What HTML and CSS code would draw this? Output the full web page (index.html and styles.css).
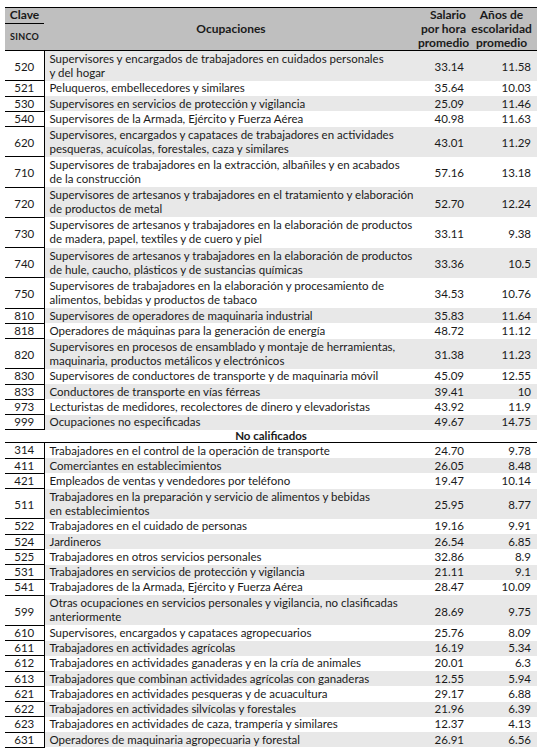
FILE: index.html
```html
<!DOCTYPE html>
<html lang="es">
<head>
<meta charset="utf-8">
<link rel="stylesheet" href="styles.css">
</head>
<body>
<table class="tbl">
  <colgroup>
    <col class="c-key"><col class="c-occ"><col class="c-sal"><col class="c-yrs">
  </colgroup>
  <thead>
    <tr>
      <th class="h-clave">Clave</th>
      <th class="h-occ" rowspan="2">Ocupaciones</th>
      <th class="h-num" rowspan="2">Salario<br>por hora<br>promedio</th>
      <th class="h-num h-yrs" rowspan="2">Años de<br>escolaridad<br>promedio</th>
    </tr>
    <tr><th class="h-sinco">SINCO</th></tr>
  </thead>
  <tbody>
    <tr class="g d"><td class="k">520</td><td class="o">Supervisores y encargados de trabajadores en cuidados personales<br>y del hogar</td><td class="n">33.14</td><td class="n y">11.58</td></tr>
    <tr class="s"><td class="k">521</td><td class="o">Peluqueros, embellecedores y similares</td><td class="n">35.64</td><td class="n y">10.03</td></tr>
    <tr class="g s"><td class="k">530</td><td class="o">Supervisores en servicios de protección y vigilancia</td><td class="n">25.09</td><td class="n y">11.46</td></tr>
    <tr class="s"><td class="k">540</td><td class="o">Supervisores de la Armada, Ejército y Fuerza Aérea</td><td class="n">40.98</td><td class="n y">11.63</td></tr>
    <tr class="g d"><td class="k">620</td><td class="o">Supervisores, encargados y capataces de trabajadores en actividades<br>pesqueras, acuícolas, forestales, caza y similares</td><td class="n">43.01</td><td class="n y">11.29</td></tr>
    <tr class="d"><td class="k">710</td><td class="o">Supervisores de trabajadores en la extracción, albañiles y en acabados<br>de la construcción</td><td class="n">57.16</td><td class="n y">13.18</td></tr>
    <tr class="g d"><td class="k">720</td><td class="o">Supervisores de artesanos y trabajadores en el tratamiento y elaboración<br>de productos de metal</td><td class="n">52.70</td><td class="n y">12.24</td></tr>
    <tr class="d"><td class="k">730</td><td class="o">Supervisores de artesanos y trabajadores en la elaboración de productos<br>de madera, papel, textiles y de cuero y piel</td><td class="n">33.11</td><td class="n y">9.38</td></tr>
    <tr class="g d"><td class="k">740</td><td class="o">Supervisores de artesanos y trabajadores en la elaboración de productos<br>de hule, caucho, plásticos y de sustancias químicas</td><td class="n">33.36</td><td class="n y">10.5</td></tr>
    <tr class="d"><td class="k">750</td><td class="o">Supervisores de trabajadores en la elaboración y procesamiento de<br>alimentos, bebidas y productos de tabaco</td><td class="n">34.53</td><td class="n y">10.76</td></tr>
    <tr class="g s"><td class="k">810</td><td class="o">Supervisores de operadores de maquinaria industrial</td><td class="n">35.83</td><td class="n y">11.64</td></tr>
    <tr class="s"><td class="k">818</td><td class="o">Operadores de máquinas para la generación de energía</td><td class="n">48.72</td><td class="n y">11.12</td></tr>
    <tr class="g d"><td class="k">820</td><td class="o">Supervisores en procesos de ensamblado y montaje de herramientas,<br>maquinaria, productos metálicos y electrónicos</td><td class="n">31.38</td><td class="n y">11.23</td></tr>
    <tr class="s"><td class="k">830</td><td class="o">Supervisores de conductores de transporte y de maquinaria móvil</td><td class="n">45.09</td><td class="n y">12.55</td></tr>
    <tr class="g s"><td class="k">833</td><td class="o">Conductores de transporte en vías férreas</td><td class="n">39.41</td><td class="n y">10</td></tr>
    <tr class="s"><td class="k">973</td><td class="o">Lecturistas de medidores, recolectores de dinero y elevadoristas</td><td class="n">43.92</td><td class="n y">11.9</td></tr>
    <tr class="g s"><td class="k">999</td><td class="o">Ocupaciones no especificadas</td><td class="n">49.67</td><td class="n y">14.75</td></tr>
    <tr class="sec"><td colspan="4">No calificados</td></tr>
    <tr class="s"><td class="k">314</td><td class="o">Trabajadores en el control de la operación de transporte</td><td class="n">24.70</td><td class="n y">9.78</td></tr>
    <tr class="g s"><td class="k">411</td><td class="o">Comerciantes en establecimientos</td><td class="n">26.05</td><td class="n y">8.48</td></tr>
    <tr class="s"><td class="k">421</td><td class="o">Empleados de ventas y vendedores por teléfono</td><td class="n">19.47</td><td class="n y">10.14</td></tr>
    <tr class="g d"><td class="k">511</td><td class="o">Trabajadores en la preparación y servicio de alimentos y bebidas<br>en establecimientos</td><td class="n">25.95</td><td class="n y">8.77</td></tr>
    <tr class="s"><td class="k">522</td><td class="o">Trabajadores en el cuidado de personas</td><td class="n">19.16</td><td class="n y">9.91</td></tr>
    <tr class="g s"><td class="k">524</td><td class="o">Jardineros</td><td class="n">26.54</td><td class="n y">6.85</td></tr>
    <tr class="s"><td class="k">525</td><td class="o">Trabajadores en otros servicios personales</td><td class="n">32.86</td><td class="n y">8.9</td></tr>
    <tr class="g s"><td class="k">531</td><td class="o">Trabajadores en servicios de protección y vigilancia</td><td class="n">21.11</td><td class="n y">9.1</td></tr>
    <tr class="s"><td class="k">541</td><td class="o">Trabajadores de la Armada, Ejército y Fuerza Aérea</td><td class="n">28.47</td><td class="n y">10.09</td></tr>
    <tr class="g d"><td class="k">599</td><td class="o">Otras ocupaciones en servicios personales y vigilancia, no clasificadas<br>anteriormente</td><td class="n">28.69</td><td class="n y">9.75</td></tr>
    <tr class="s"><td class="k">610</td><td class="o">Supervisores, encargados y capataces agropecuarios</td><td class="n">25.76</td><td class="n y">8.09</td></tr>
    <tr class="g s"><td class="k">611</td><td class="o">Trabajadores en actividades agrícolas</td><td class="n">16.19</td><td class="n y">5.34</td></tr>
    <tr class="s"><td class="k">612</td><td class="o">Trabajadores en actividades ganaderas y en la cría de animales</td><td class="n">20.01</td><td class="n y">6.3</td></tr>
    <tr class="g s"><td class="k">613</td><td class="o">Trabajadores que combinan actividades agrícolas con ganaderas</td><td class="n">12.55</td><td class="n y">5.94</td></tr>
    <tr class="s"><td class="k">621</td><td class="o">Trabajadores en actividades pesqueras y de acuacultura</td><td class="n">29.17</td><td class="n y">6.88</td></tr>
    <tr class="g s"><td class="k">622</td><td class="o">Trabajadores en actividades silvícolas y forestales</td><td class="n">21.96</td><td class="n y">6.39</td></tr>
    <tr class="s"><td class="k">623</td><td class="o">Trabajadores en actividades de caza, trampería y similares</td><td class="n">12.37</td><td class="n y">4.13</td></tr>
    <tr class="g s"><td class="k">631</td><td class="o">Operadores de maquinaria agropecuaria y forestal</td><td class="n">26.91</td><td class="n y">6.56</td></tr>
  </tbody>
</table>
</body>
</html>
```
FILE: styles.css
```css
html, body {
  margin: 0;
  padding: 0;
  background: #ffffff;
}
body {
  padding: 7px 0 0 5px;
  font-family: Lato, "Liberation Sans", sans-serif;
  font-size: 11.5px;
  color: #1a1a1a;
}
.tbl {
  border-collapse: collapse;
  table-layout: fixed;
  width: 532px;
}
.c-key { width: 39px; }
.c-occ { width: 374px; }
.c-sal { width: 48px; }
.c-yrs { width: 71px; }

.tbl th, .tbl td {
  padding: 0;
  line-height: 14px;
}
thead tr:first-child th { border-top: 1px solid #000; }
thead th {
  background: #bfbfbf;
  font-weight: bold;
  border-bottom: 1px solid #000;
  font-size: 12px;
}
.h-clave {
  height: 14px;
  text-align: center;
  vertical-align: top;
  border-bottom: 1px solid #000;
}
.tbl .h-sinco {
  height: 25px;
  font-size: 9px;
  letter-spacing: 0.3px;
  text-align: center;
  vertical-align: middle;
}
.h-occ {
  text-align: center;
  vertical-align: middle;
  padding-top: 4px;
}
.h-num {
  text-align: right;
  vertical-align: bottom;
  padding-right: 2px;
  white-space: nowrap;
}
.h-yrs { text-align: center; padding-right: 0; }

tbody tr.s { height: 15.25px; }
tbody tr.d { height: 30.25px; }
tbody tr.g .o, tbody tr.g .n { background: #e8e8e8; }

.k {
  text-align: center;
  vertical-align: middle;
  border-right: 1px solid #000;
  border-bottom: 1px solid #000;
}
.o {
  padding-left: 5px !important;
  vertical-align: middle;
  white-space: nowrap;
}
.n {
  text-align: right;
  vertical-align: middle;
  padding-right: 2px !important;
}
.n.y { padding-right: 6px !important; }
tr.d .k, tr.d .n { padding-top: 3px; }

.sec td {
  height: 12px;
  text-align: center;
  font-weight: bold;
  border-bottom: 1px solid #000;
  line-height: 12px;
}
```
